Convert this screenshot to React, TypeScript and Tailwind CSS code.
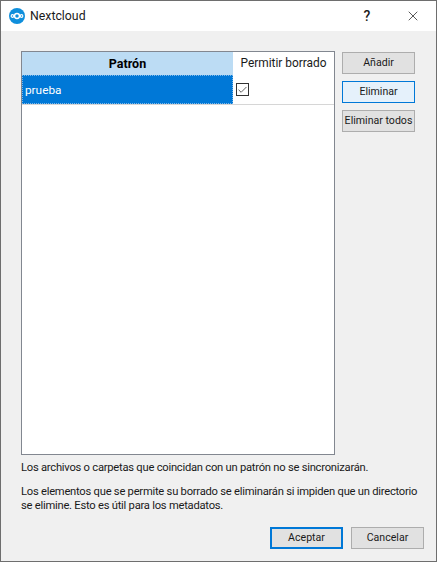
import React from "react";
import {Check, X} from "lucide-react";

const SideButton = ({label, focused}: {label: string; focused?: boolean}) => (
  <button
    className={`h-[22px] w-[73px] border pt-[1px] text-[10.6px] leading-none whitespace-nowrap text-[#1a1a1a] ${
      focused ? "border-[#0078d7] bg-[#e5f1fb]" : "border-[#adadad] bg-[#e1e1e1]"
    }`}
  >
    {label}
  </button>
);

const NextcloudLogo = () => (
  <svg width="16" height="16" viewBox="0 0 17 17">
    <circle cx="8.5" cy="8.5" r="8.5" fill="#0f8fdc" />
    <circle cx="8.5" cy="8.5" r="2.6" fill="none" stroke="#fff" strokeWidth="1.5" />
    <circle cx="3.7" cy="8.5" r="1.4" fill="none" stroke="#fff" strokeWidth="1.2" />
    <circle cx="13.3" cy="8.5" r="1.4" fill="none" stroke="#fff" strokeWidth="1.2" />
  </svg>
);

const App = () => {
  return (
    <div className="flex h-[562px] w-[437px] flex-col border border-[#6e6e6e] bg-[#f0f0f0] font-['Roboto',sans-serif] text-[#1a1a1a]">
      <div className="flex h-[30px] shrink-0 items-center bg-white pl-[8px]">
        <NextcloudLogo />
        <span className="ml-[5px] text-[12.3px]">Nextcloud</span>
        <span className="ml-auto w-[14px] text-center text-[14px] font-medium">?</span>
        <span className="ml-[31px] mr-[15px]">
          <X size={16} strokeWidth={1.1} />
        </span>
      </div>

      <div className="flex flex-1 flex-col px-[20px] pt-[20px]">
        <div className="flex gap-[7px]">
          <div className="h-[404px] w-[314px] border border-[#828790] bg-white">
            <div className="flex h-[23px] leading-[23px]">
              <div className="w-[211px] bg-[#bcdcf4] text-center text-[12.5px] font-bold text-black">Patrón</div>
              <div className="flex-1 text-center text-[11.9px]">Permitir borrado</div>
            </div>
            <div className="flex h-[30px] border-b border-[#d6d6d6]">
              <div className="w-[211px] border border-dotted border-[#7fb8e8] bg-[#0078d7] pl-[2px] text-[11.8px] leading-[28px] text-white">
                prueba
              </div>
              <div className="flex flex-1 items-center pl-[3px]">
                <span className="flex h-[13px] w-[13px] items-center justify-center border border-[#333] bg-white">
                  <Check size={12} strokeWidth={1.5} />
                </span>
              </div>
            </div>
          </div>
          <div className="flex flex-col gap-[7px] pt-[1px]">
            <SideButton label="Añadir" />
            <SideButton label="Eliminar" focused />
            <SideButton label="Eliminar todos" />
          </div>
        </div>

        <p className="mt-[5px] text-[11.2px] leading-[16px] tracking-[-0.24px] whitespace-nowrap">
          Los archivos o carpetas que coincidan con un patrón no se sincronizarán.
        </p>
        <p className="mt-[9px] text-[11.2px] leading-[14px] tracking-[-0.24px] whitespace-nowrap">
          Los elementos que se permite su borrado se eliminarán si impiden que un directorio
          <br />
          se elimine. Esto es útil para los metadatos.
        </p>

        <div className="mt-[14px] -mr-[8px] flex justify-end gap-[8px]">
          <button className="h-[22px] w-[73px] border-2 border-[#0078d7] bg-[#e1e1e1] text-[10.6px] leading-none">
            Aceptar
          </button>
          <button className="h-[22px] w-[73px] border border-[#adadad] bg-[#e1e1e1] text-[10.6px] leading-none">
            Cancelar
          </button>
        </div>
      </div>
    </div>
  );
};

export default App;
